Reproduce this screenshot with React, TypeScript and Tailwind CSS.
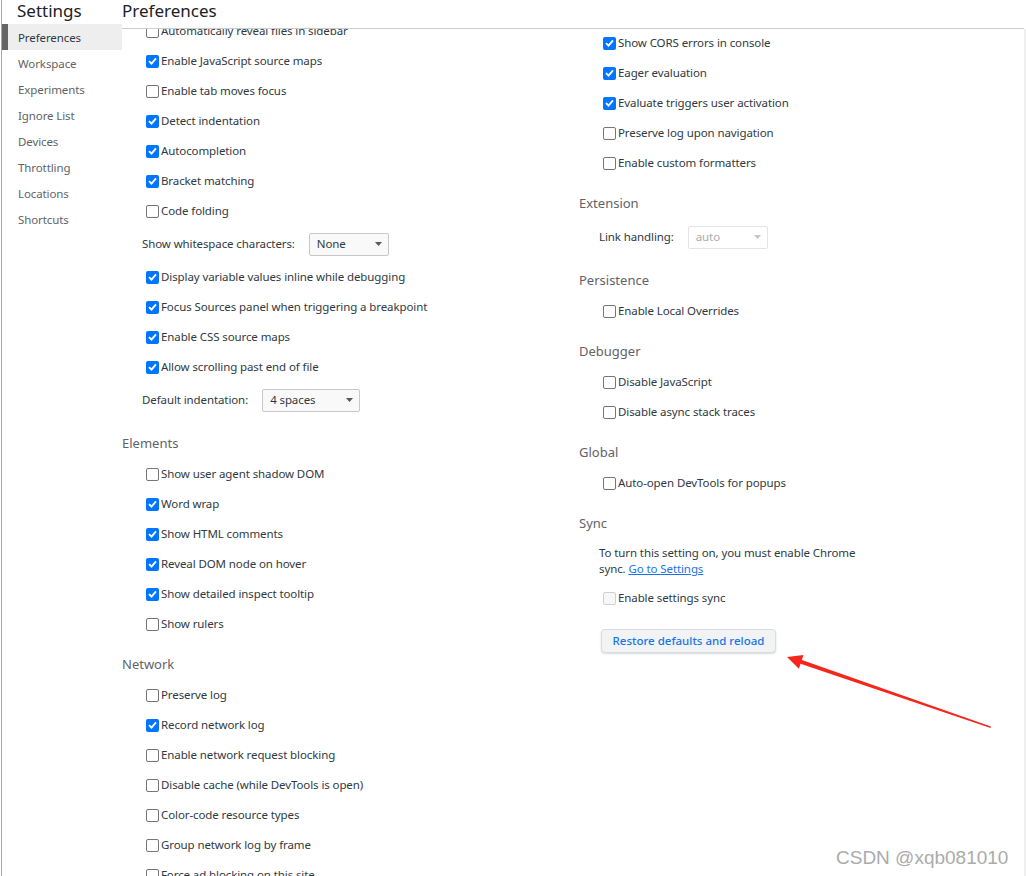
import React from "react";

type Item = { label: string; checked?: boolean };

const Check = ({ checked, disabled }: { checked?: boolean; disabled?: boolean }) =>
  checked ? (
    <span className="w-[13px] h-[13px] rounded-[2px] bg-[#0075ff] flex items-center justify-center shrink-0">
      <svg width="9" height="8" viewBox="0 0 9 8">
        <path d="M1 4.1 L3.5 6.5 L8 1.3" stroke="white" strokeWidth="1.9" fill="none" />
      </svg>
    </span>
  ) : disabled ? (
    <span className="w-[13px] h-[13px] rounded-[2px] border border-[#d0d0d0] bg-[#f7f7f7] shrink-0" />
  ) : (
    <span className="w-[13px] h-[13px] rounded-[2px] border border-[#767676] bg-white shrink-0" />
  );

const CheckRow = ({ label, checked, disabled }: { label: string; checked?: boolean; disabled?: boolean }) => (
  <div className="h-[30px] flex items-center pl-[24px] gap-[2px] text-[11.5px] tracking-[-0.1px] text-[#303942] whitespace-nowrap">
    <Check checked={checked} disabled={disabled} />
    <span>{label}</span>
  </div>
);

const Arrow = ({ color }: { color: string }) => (
  <svg width="7" height="4" viewBox="0 0 7 4">
    <polygon points="0,0 7,0 3.5,4" fill={color} />
  </svg>
);

const SelectRow = ({
  label,
  value,
  width,
  disabled,
}: {
  label: string;
  value: string;
  width: string;
  disabled?: boolean;
}) => (
  <div className="h-[36px] flex items-center pl-[20px] text-[11.5px] tracking-[-0.1px] text-[#303942] whitespace-nowrap">
    <span>{label}</span>
    <div
      className={`ml-[14px] h-[23px] rounded-[2px] border flex items-center justify-between pl-[7px] pr-[6px] ${width} ${
        disabled ? "border-[#e4e4e4] bg-white text-[#ababab]" : "border-[#c8c8c8] bg-[#f9f9f9] text-[#303942]"
      }`}
    >
      <span>{value}</span>
      <Arrow color={disabled ? "#c4c4c4" : "#5a5a5a"} />
    </div>
  </div>
);

const Header = ({ title }: { title: string }) => (
  <div className="pt-[15px] pb-[6px] h-[41px] text-[13px] leading-[20px] text-[#5f6368]">{title}</div>
);

const sourcesA: Item[] = [
  { label: "Automatically reveal files in sidebar" },
  { label: "Enable JavaScript source maps", checked: true },
  { label: "Enable tab moves focus" },
  { label: "Detect indentation", checked: true },
  { label: "Autocompletion", checked: true },
  { label: "Bracket matching", checked: true },
  { label: "Code folding" },
];
const sourcesB: Item[] = [
  { label: "Display variable values inline while debugging", checked: true },
  { label: "Focus Sources panel when triggering a breakpoint", checked: true },
  { label: "Enable CSS source maps", checked: true },
  { label: "Allow scrolling past end of file", checked: true },
];
const elements: Item[] = [
  { label: "Show user agent shadow DOM" },
  { label: "Word wrap", checked: true },
  { label: "Show HTML comments", checked: true },
  { label: "Reveal DOM node on hover", checked: true },
  { label: "Show detailed inspect tooltip", checked: true },
  { label: "Show rulers" },
];
const network: Item[] = [
  { label: "Preserve log" },
  { label: "Record network log", checked: true },
  { label: "Enable network request blocking" },
  { label: "Disable cache (while DevTools is open)" },
  { label: "Color-code resource types" },
  { label: "Group network log by frame" },
  { label: "Force ad blocking on this site" },
];
const consoleItems: Item[] = [
  { label: "Show CORS errors in console", checked: true },
  { label: "Eager evaluation", checked: true },
  { label: "Evaluate triggers user activation", checked: true },
  { label: "Preserve log upon navigation" },
  { label: "Enable custom formatters" },
];

const nav = ["Preferences", "Workspace", "Experiments", "Ignore List", "Devices", "Throttling", "Locations", "Shortcuts"];

export default function App() {
  return (
    <div
      className="w-[1026px] h-[876px] bg-white flex overflow-hidden relative"
      style={{ fontFamily: "'Noto Sans', 'Open Sans', sans-serif" }}
    >
      <div className="w-[1px] shrink-0 bg-white" />
      <div className="w-[1px] shrink-0 bg-[#a9a9a9]" />
      <aside className="w-[120px] shrink-0 flex flex-col">
        <div className="h-[24px] pl-[15px] text-[17px] leading-[22px] text-[#202124]">Settings</div>
        {nav.map((n, i) => (
          <div
            key={n}
            className={`h-[26px] flex items-center text-[11.5px] tracking-[-0.1px] ${
              i === 0 ? "bg-[#eeeeee] text-[#303942]" : "text-[#5f6368]"
            }`}
          >
            <span className={`w-[6px] self-stretch ${i === 0 ? "bg-[#646464]" : ""}`} />
            <span className="pl-[10px] pt-[2px]">{n}</span>
          </div>
        ))}
      </aside>
      <main className="flex-1 flex flex-col min-w-0">
        <div className="h-[29px] text-[17px] leading-[22px] text-[#202124] border-b border-[#cccccc] shrink-0 mr-[2px]">
          Preferences
        </div>
        <div className="flex-1 flex overflow-hidden">
          <div className="flex-1 flex overflow-hidden">
            <div className="w-[457px] shrink-0 mt-[-13px]">
              {sourcesA.map((r) => (
                <CheckRow key={r.label} {...r} />
              ))}
              <SelectRow label="Show whitespace characters:" value="None" width="w-[80px]" />
              {sourcesB.map((r) => (
                <CheckRow key={r.label} {...r} />
              ))}
              <SelectRow label="Default indentation:" value="4 spaces" width="w-[98px]" />
              <Header title="Elements" />
              {elements.map((r) => (
                <CheckRow key={r.label} {...r} />
              ))}
              <Header title="Network" />
              {network.map((r) => (
                <CheckRow key={r.label} {...r} />
              ))}
            </div>
            <div className="flex-1 mt-[-1px]">
              {consoleItems.map((r) => (
                <CheckRow key={r.label} {...r} />
              ))}
              <Header title="Extension" />
              <SelectRow label="Link handling:" value="auto" width="w-[80px]" disabled />
              <Header title="Persistence" />
              <CheckRow label="Enable Local Overrides" />
              <Header title="Debugger" />
              <CheckRow label="Disable JavaScript" />
              <CheckRow label="Disable async stack traces" />
              <Header title="Global" />
              <CheckRow label="Auto-open DevTools for popups" />
              <Header title="Sync" />
              <div className="pl-[20px] pt-[6px] text-[11.5px] tracking-[-0.1px] leading-[16px] text-[#303942] whitespace-nowrap">
                To turn this setting on, you must enable Chrome
                <br />
                sync. <span className="text-[#1a73e8] underline">Go to Settings</span>
              </div>
              <div className="mt-[6px]">
                <CheckRow label="Enable settings sync" disabled />
              </div>
              <div className="pl-[22px] mt-[14px]">
                <button className="h-[24px] w-[175px] rounded-[4px] border border-[#dadce0] bg-[#f1f3f4] text-[#1a73e8] text-[11.5px] font-medium shadow-[0_1px_2px_rgba(0,0,0,0.15)]">
                  Restore defaults and reload
                </button>
              </div>
            </div>
          </div>
          <div className="w-[2px] shrink-0 bg-[#efefef]" />
        </div>
      </main>

      <svg className="absolute left-0 top-0 pointer-events-none" width="1026" height="876">
        <polygon
          points="787,657 803.5,655 801.9,660 990.9,726.6 990.5,727.9 800.5,663.8 798.9,668.8"
          fill="#f5261b"
        />
      </svg>
      <div
        className="absolute left-[836px] top-[844px] text-[19px] text-[#ababab]"
        style={{ fontFamily: "'Liberation Sans', Arial, sans-serif" }}
      >
        CSDN @xqb081010
      </div>
    </div>
  );
}
